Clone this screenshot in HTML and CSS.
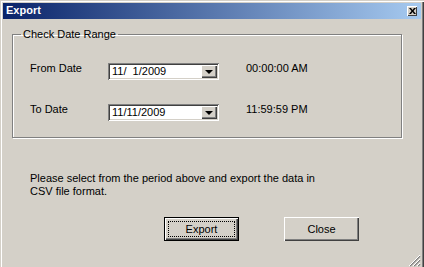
FILE: index.html
```html
<!DOCTYPE html>
<html lang="en">
<head>
  <meta charset="UTF-8">
  <title>Export</title>
  <link rel="stylesheet" href="styles.css">
</head>
<body>
<div class="window">
  <div class="titlebar">
    <span class="title">Export</span>
    <span class="caption-btn">
      <svg width="7" height="6" viewBox="0 0 7 6"><path d="M0 0h2l1.5 2 1.5-2h2l-2.5 3 2.5 3h-2l-1.5-2-1.5 2h-2l2.5-3z" fill="#000"/></svg>
    </span>
  </div>

  <fieldset class="range">
    <legend>Check Date Range</legend>
    <div class="rows">
      <span class="label">From Date</span>
      <div class="combo">
        <span class="value">11/&nbsp;&nbsp;1/2009</span>
        <span class="drop"><i class="arrow"></i></span>
      </div>
      <span class="time">00:00:00 AM</span>

      <span class="label">To Date</span>
      <div class="combo">
        <span class="value">11/11/2009</span>
        <span class="drop"><i class="arrow"></i></span>
      </div>
      <span class="time">11:59:59 PM</span>
    </div>
  </fieldset>

  <p class="message">Please select from the period above and export the data in<br>CSV file format.</p>

  <div class="actions">
    <button class="btn default"><span class="focus">Export</span></button>
    <button class="btn">Close</button>
  </div>

  <svg class="grip" width="12" height="12" viewBox="0 0 12 12">
    <path d="M11 1L1 11M11 5L5 11M11 9L9 11" stroke="#808080" stroke-width="1.5"/>
    <path d="M11 0L0 11M11 4L4 11M11 8L8 11" stroke="#fff" stroke-width="1"/>
  </svg>
</div>
</body>
</html>
```

FILE: styles.css
```css
html, body {
    margin: 0;
    padding: 0;
}
body {
    font-family: 'Liberation Sans', Arial, sans-serif;
    font-size: 11px;
    line-height: 13px;
    color: #000;
    background: #d4d0c8;
}
.window {
    position: relative;
    box-sizing: border-box;
    width: 424px;
    height: 267px;
    padding: 3px 3px 0 3px;
    background: #d4d0c8;
    box-shadow: inset 1px 1px 0 #d4d0c8, inset 2px 2px 0 #fff, inset -1px 0 0 #404040, inset -2px 0 0 #808080;
    overflow: hidden;
}
.titlebar {
    display: flex;
    align-items: flex-start;
    height: 16px;
    background: linear-gradient(to right, #0a246a, #a6caf0);
}
.title {
    color: #fff;
    font-weight: bold;
    padding: 1px 0 0 3px;
}
.caption-btn {
    margin: 3px 4px 0 auto;
    box-sizing: border-box;
    width: 10px;
    height: 10px;
    display: flex;
    align-items: center;
    justify-content: center;
    background: #d4d0c8;
    box-shadow: inset 1px 1px 0 #fff, inset -1px -1px 0 #404040;
}

/* group box */
.range {
    margin: 9px 19px 0 9px;
    padding: 22px 0 16px 0;
    border: 1px solid #808080;
    box-shadow: 1px 1px 0 #fff, inset 1px 1px 0 #fff;
}
.range legend {
    margin-left: 8px;
    padding: 0 2px;
}
.rows {
    display: grid;
    grid-template-columns: 78px 111px auto;
    row-gap: 24px;
    margin-left: 17px;
    align-items: start;
}
.label, .time {
    margin-top: -1px;
}
.time {
    padding-left: 27px;
}
.combo {
    display: flex;
    box-sizing: border-box;
    height: 17px;
    padding: 2px;
    background: #fff;
    box-shadow: inset 1px 1px 0 #808080, inset -1px -1px 0 #fff, inset 2px 2px 0 #404040, inset -2px -2px 0 #d4d0c8;
}
.combo .value {
    flex: 1;
    padding-left: 2px;
}
.combo .drop {
    box-sizing: border-box;
    width: 16px;
    height: 13px;
    display: flex;
    align-items: center;
    justify-content: center;
    background: #d4d0c8;
    box-shadow: inset 1px 1px 0 #fff, inset -1px -1px 0 #404040, inset -2px -2px 0 #808080;
}
.arrow {
    width: 0;
    height: 0;
    margin-top: 1px;
    border-left: 4px solid transparent;
    border-right: 4px solid transparent;
    border-top: 4px solid #000;
}

.message {
    margin: 34px 0 0 27px;
}

.actions {
    display: flex;
    gap: 45px;
    margin: 19px 0 0 161px;
}
.btn {
    box-sizing: border-box;
    width: 75px;
    height: 24px;
    padding: 0;
    border: none;
    font: inherit;
    color: #000;
    background: #d4d0c8;
    box-shadow: inset 1px 1px 0 #fff, inset -1px -1px 0 #404040, inset -2px -2px 0 #808080;
}
.btn.default {
    border: 1px solid #000;
    display: flex;
    padding: 3px;
}
.btn .focus {
    flex: 1;
    display: flex;
    align-items: center;
    justify-content: center;
    border: 1px dotted #000;
}
.grip {
    position: absolute;
    right: 3px;
    bottom: 0;
}
```
